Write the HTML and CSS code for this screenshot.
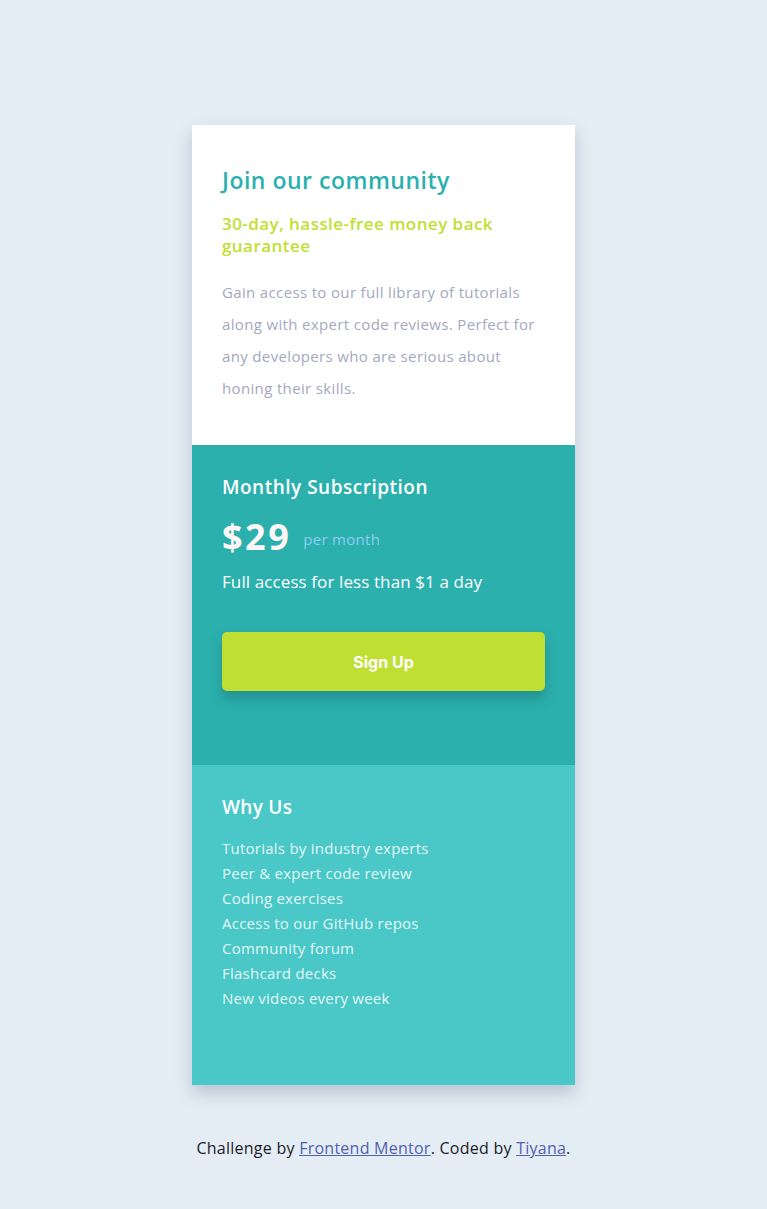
FILE: index.html
```html
<!DOCTYPE html>
<html lang="en">
<head>
<meta charset="utf-8">
<title>Single price grid</title>
<link rel="stylesheet" href="styles.css">
</head>
<body>
<main class="card">
  <section class="top">
    <h1 class="title">Join our community</h1>
    <h2 class="subtitle">30-day, hassle-free money back guarantee</h2>
    <p class="desc">Gain access to our full library of tutorials along with expert code reviews. Perfect for any developers who are serious about honing their skills.</p>
  </section>
  <section class="sub">
    <h3 class="sub-title">Monthly Subscription</h3>
    <div class="price-row">
      <span class="price">$29</span>
      <span class="per">per month</span>
    </div>
    <p class="access">Full access for less than $1 a day</p>
    <button class="btn">Sign Up</button>
  </section>
  <section class="why">
    <h3 class="why-title">Why Us</h3>
    <ul class="why-list">
      <li>Tutorials by industry experts</li>
      <li>Peer &amp; expert code review</li>
      <li>Coding exercises</li>
      <li>Access to our GitHub repos</li>
      <li>Community forum</li>
      <li>Flashcard decks</li>
      <li>New videos every week</li>
    </ul>
  </section>
</main>
<footer class="attribution">Challenge by <a href="#">Frontend Mentor</a>. Coded by <a href="#">Tiyana</a>.</footer>
</body>
</html>
```

FILE: styles.css
```css
* { box-sizing: border-box; }
html, body { margin: 0; padding: 0; }
body {
  background: #e5edf4;
  font-family: "Open Sans", "Lato", sans-serif;
  min-height: 1209px;
  display: flex;
  flex-direction: column;
  align-items: center;
  padding-top: 125px;
}
.card {
  width: 383px;
  box-shadow: 0 8px 16px rgba(60, 80, 110, 0.25);
  display: flex;
  flex-direction: column;
}
.top {
  background: #fff;
  height: 320px;
  padding: 40px 30px 0 30px;
}
.title {
  margin: 0;
  color: #2bb0ae;
  font-size: 23px;
  font-weight: 600;
  letter-spacing: 0.5px;
  line-height: 30px;
}
.subtitle {
  margin: 18px 0 0;
  color: #bfe032;
  font-size: 17px;
  font-weight: 600;
  letter-spacing: 0.45px;
  line-height: 22px;
}
.desc {
  margin: 19px 0 0;
  color: #a4a8c0;
  font-size: 15px;
  letter-spacing: 0.35px;
  line-height: 32px;
}
.sub {
  background: #2bb0ae;
  height: 320px;
  padding: 30px 30px 0 30px;
  color: #fff;
}
.sub-title {
  margin: 0;
  font-size: 19px;
  font-weight: 600;
  letter-spacing: 0.5px;
  line-height: 24px;
}
.price-row {
  display: flex;
  align-items: center;
  gap: 12px;
  margin-top: 16px;
}
.price {
  font-size: 36px;
  font-weight: 700;
  letter-spacing: 2.5px;
  line-height: 44px;
  color: #fdf6f4;
}
.per {
  color: #8dcdf3;
  font-size: 15px;
  letter-spacing: 0.3px;
  padding-top: 4px;
}
.access {
  margin: 12px 0 0;
  font-size: 17px;
  letter-spacing: 0.1px;
  line-height: 22px;
}
.btn {
  display: block;
  margin-top: 39px;
  width: 323px;
  height: 59px;
  border: 0;
  border-radius: 5px;
  background: #bfe032;
  color: #fff;
  font-family: "Inter", "Roboto", sans-serif;
  font-size: 16px;
  font-weight: 700;
  box-shadow: 0 8px 12px rgba(20, 90, 90, 0.35);
}
.why {
  background: #49c8c7;
  height: 320px;
  padding: 30px 30px 0 30px;
  color: #e4f6f6;
}
.why-title {
  margin: 0;
  color: #fff;
  font-size: 19px;
  font-weight: 600;
  letter-spacing: 0.3px;
  line-height: 24px;
}
.why-list {
  list-style: none;
  margin: 17px 0 0;
  padding: 0;
  font-size: 15px;
  letter-spacing: 0.25px;
  line-height: 25px;
}
.attribution {
  margin-top: 52px;
  font-size: 16px;
  letter-spacing: 0.25px;
  color: #1b1b2b;
  line-height: 22px;
}
.attribution a {
  color: #5160b0;
}
```
